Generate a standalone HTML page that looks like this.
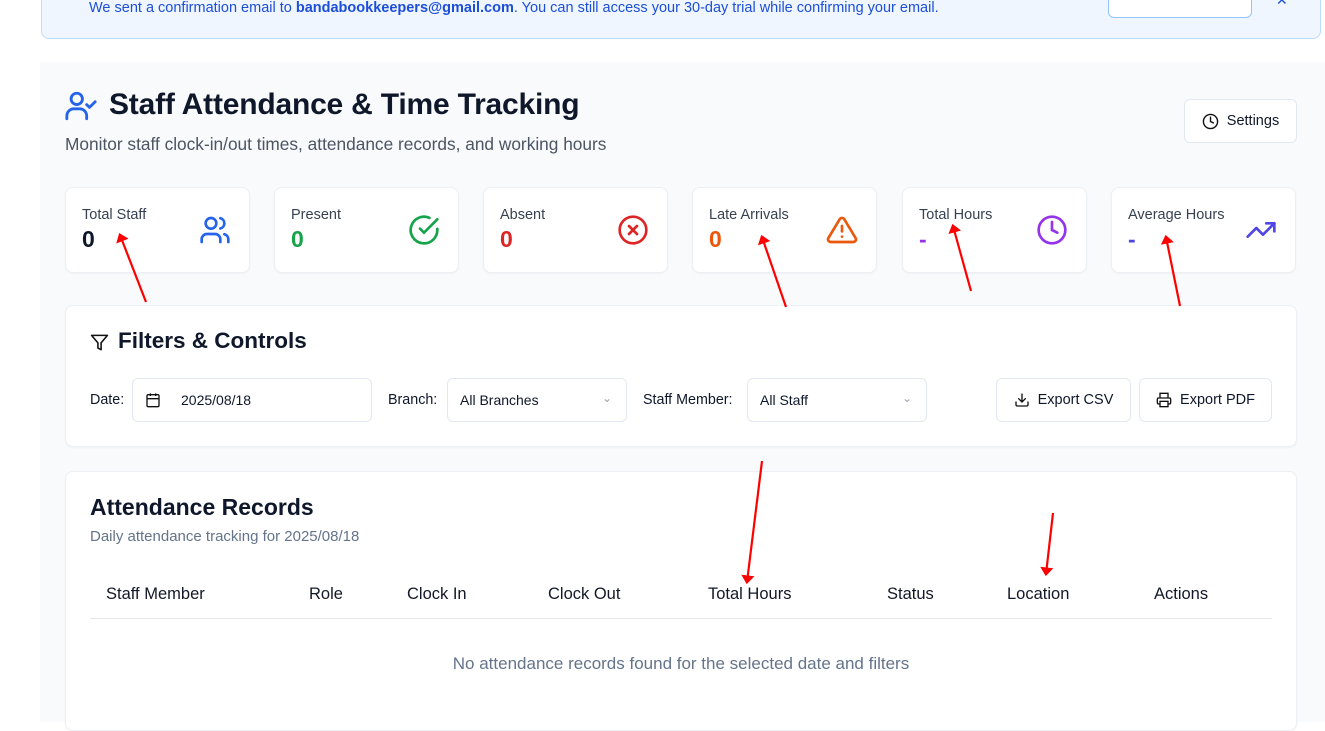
<!DOCTYPE html>
<html><head><meta charset="utf-8"><style>
*{box-sizing:border-box;margin:0;padding:0}
body{width:1325px;height:710px;overflow:hidden;background:#fff;font-family:"Liberation Sans",sans-serif;position:relative;color:#0f172a}
.abs{position:absolute}
.banner{left:41px;top:-10px;width:1280px;height:49px;background:#eff6ff;border:1px solid #bfdbfe;border-radius:8px}
.panel{left:40px;top:62px;width:1285px;height:660px;background:#f8fafc}
.card{position:absolute;background:#fff;border:1px solid #eceff3;border-radius:8px;box-shadow:0 1px 2px rgba(0,0,0,.04)}
.stat{top:187px;width:185px;height:86px}
.stat .l{position:absolute;left:16px;top:19px;font-size:14.5px;color:#374151}
.stat .v{position:absolute;left:16px;top:38px;font-size:23px;font-weight:bold}
.stat svg{position:absolute;right:18px;top:26px}
.btn{position:absolute;background:#fff;border:1px solid #e2e8f0;border-radius:6px;font-size:15px;display:flex;align-items:center;justify-content:center;gap:8px}
.inp{position:absolute;background:#fff;border:1px solid #e2e8f0;border-radius:6px;font-size:14px;display:flex;align-items:center;padding-left:12px}
.lab{position:absolute;font-size:14.3px;top:392px}
.th{position:absolute;top:585px;font-size:16.5px;color:#111827}
</style></head><body>
<div class="abs banner"></div>
<div class="abs" style="left:89px;top:0px;font-size:14.5px;color:#1d4ed8">We sent a confirmation email to <b>bandabookkeepers@gmail.com</b>. You can still access your 30-day trial while confirming your email.</div>
<div class="abs" style="left:1108px;top:-10px;width:144px;height:28px;background:#fff;border:1px solid #93c5fd;border-radius:6px;overflow:hidden"><span style="position:absolute;left:40px;top:-4px;font-size:14.5px;color:#1d4ed8">Resend Email</span></div>
<div class="abs" style="left:1276px;top:-8px;font-size:14px;color:#1d4ed8">✕</div>
<div class="abs panel"></div>

<svg class="abs" style="left:64px;top:89px" width="34" height="34" viewBox="0 0 24 24" fill="none" stroke="#2563eb" stroke-width="2" stroke-linecap="round" stroke-linejoin="round"><path d="M2 21v-2a5 5 0 0 1 5-5h4a5 5 0 0 1 5 5v2"/><circle cx="9" cy="7" r="4"/><path d="M16 11l2 2 4-4"/></svg>
<div class="abs" style="left:109px;top:88px;font-size:30px;font-weight:bold;color:#0f172a;letter-spacing:-0.2px">Staff Attendance &amp; Time Tracking</div>
<div class="abs" style="left:65px;top:134px;font-size:17.3px;color:#4b5563">Monitor staff clock-in/out times, attendance records, and working hours</div>
<div class="btn" style="left:1184px;top:99px;width:113px;height:44px;font-size:14.5px"><svg width="17" height="17" viewBox="0 0 24 24" fill="none" stroke="#111" stroke-width="2" stroke-linecap="round"><circle cx="12" cy="12" r="10"/><path d="M12 6v6l4 2"/></svg>Settings</div>

<div class="card stat" style="left:65px"><div class="l">Total Staff</div><div class="v" style="color:#0f172a">0</div><svg width="32" height="32" viewBox="0 0 24 24" fill="none" stroke="#2563eb" stroke-width="2" stroke-linecap="round"><path d="M16 21v-2a4 4 0 0 0-4-4H6a4 4 0 0 0-4 4v2"/><circle cx="9" cy="7" r="4"/><path d="M22 21v-2a4 4 0 0 0-3-3.870M16 3.13a4 4 0 0 1 0 7.75"/></svg></div>
<div class="card stat" style="left:274px"><div class="l">Present</div><div class="v" style="color:#16a34a">0</div><svg width="32" height="32" viewBox="0 0 24 24" fill="none" stroke="#16a34a" stroke-width="2" stroke-linecap="round"><path d="M22 11.1V12a10 10 0 1 1-5.9-9.1"/><path d="M22 4L12 14l-3-3"/></svg></div>
<div class="card stat" style="left:483px"><div class="l">Absent</div><div class="v" style="color:#dc2626">0</div><svg width="32" height="32" viewBox="0 0 24 24" fill="none" stroke="#dc2626" stroke-width="2" stroke-linecap="round"><circle cx="12" cy="12" r="10"/><path d="M15 9l-6 6M9 9l6 6"/></svg></div>
<div class="card stat" style="left:692px"><div class="l">Late Arrivals</div><div class="v" style="color:#ea580c">0</div><svg width="32" height="32" viewBox="0 0 24 24" fill="none" stroke="#ea580c" stroke-width="2" stroke-linecap="round" stroke-linejoin="round"><path d="M10.3 3.9L1.8 18a2 2 0 0 0 1.7 3h17a2 2 0 0 0 1.7-3L13.7 3.9a2 2 0 0 0-3.4 0z"/><path d="M12 9v4M12 17h.01"/></svg></div>
<div class="card stat" style="left:902px"><div class="l">Total Hours</div><div class="v" style="color:#9333ea">-</div><svg width="32" height="32" viewBox="0 0 24 24" fill="none" stroke="#9333ea" stroke-width="2" stroke-linecap="round"><circle cx="12" cy="12" r="10"/><path d="M12 6v6l4 2"/></svg></div>
<div class="card stat" style="left:1111px"><div class="l">Average Hours</div><div class="v" style="color:#4f46e5">-</div><svg width="32" height="32" viewBox="0 0 24 24" fill="none" stroke="#4f46e5" stroke-width="2" stroke-linecap="round" stroke-linejoin="round"><path d="M22 7l-8.5 8.5-5-5L2 17"/><path d="M16 7h6v6"/></svg></div>

<div class="card" style="left:65px;top:305px;width:1232px;height:142px"></div>
<svg class="abs" style="left:90px;top:333px" width="19" height="19" viewBox="0 0 24 24" fill="none" stroke="#111" stroke-width="2" stroke-linejoin="round"><path d="M22 3H2l8 9.5V19l4 2v-8.5z"/></svg>
<div class="abs" style="left:118px;top:328px;font-size:22.5px;font-weight:bold">Filters &amp; Controls</div>
<div class="lab" style="left:90px">Date:</div>
<div class="inp" style="left:132px;top:378px;width:240px;height:44px"><svg width="16" height="16" viewBox="0 0 24 24" fill="none" stroke="#111" stroke-width="2"><rect x="3" y="4" width="18" height="18" rx="2"/><path d="M16 2v4M8 2v4M3 10h18"/></svg><span style="margin-left:20px">2025/08/18</span></div>
<div class="lab" style="left:388px">Branch:</div>
<div class="inp" style="left:447px;top:378px;width:180px;height:44px">All Branches<span style="position:absolute;right:14px;top:12px;color:#9ca3af;font-size:12px">&#8964;</span></div>
<div class="lab" style="left:643px">Staff Member:</div>
<div class="inp" style="left:747px;top:378px;width:180px;height:44px">All Staff<span style="position:absolute;right:14px;top:12px;color:#9ca3af;font-size:12px">&#8964;</span></div>
<div class="btn" style="left:996px;top:378px;width:135px;height:44px;font-size:14.5px"><svg width="16" height="16" viewBox="0 0 24 24" fill="none" stroke="#111" stroke-width="2" stroke-linecap="round"><path d="M21 15v4a2 2 0 0 1-2 2H5a2 2 0 0 1-2-2v-4M7 10l5 5 5-5M12 15V3"/></svg>Export CSV</div>
<div class="btn" style="left:1139px;top:378px;width:133px;height:44px;font-size:14.5px"><svg width="16" height="16" viewBox="0 0 24 24" fill="none" stroke="#111" stroke-width="2"><path d="M6 9V2h12v7M6 18H4a2 2 0 0 1-2-2v-5a2 2 0 0 1 2-2h16a2 2 0 0 1 2 2v5a2 2 0 0 1-2 2h-2"/><rect x="6" y="14" width="12" height="8"/></svg>Export PDF</div>

<div class="card" style="left:65px;top:471px;width:1232px;height:260px"></div>
<div class="abs" style="left:90px;top:494px;font-size:23px;font-weight:bold">Attendance Records</div>
<div class="abs" style="left:90px;top:528px;font-size:15px;color:#64748b">Daily attendance tracking for 2025/08/18</div>
<div class="th" style="left:106px">Staff Member</div>
<div class="th" style="left:309px">Role</div>
<div class="th" style="left:407px">Clock In</div>
<div class="th" style="left:548px">Clock Out</div>
<div class="th" style="left:708px">Total Hours</div>
<div class="th" style="left:887px">Status</div>
<div class="th" style="left:1007px">Location</div>
<div class="th" style="left:1154px">Actions</div>
<div class="abs" style="left:90px;top:618px;width:1182px;height:1px;background:#e5e7eb"></div>
<div class="abs" style="left:0;width:1362px;text-align:center;top:654px;font-size:17px;color:#64748b">No attendance records found for the selected date and filters</div>

<svg class="abs" style="left:0;top:0" width="1325" height="710">
<defs><marker id="a" markerWidth="4" markerHeight="6" refX="3" refY="3" orient="auto" markerUnits="strokeWidth"><path d="M0,0 L4,3 L0,6z" fill="#f00"/></marker></defs>
<g stroke="#f00" stroke-width="2.2" marker-end="url(#a)">
<line x1="146" y1="302" x2="120" y2="235"/>
<line x1="786" y1="307" x2="762" y2="237"/>
<line x1="971" y1="291" x2="953" y2="226"/>
<line x1="1180" y1="306" x2="1166" y2="237"/>
<line x1="762" y1="461" x2="747" y2="582"/>
<line x1="1053" y1="513" x2="1046" y2="574"/>
</g></svg>
</body></html>
